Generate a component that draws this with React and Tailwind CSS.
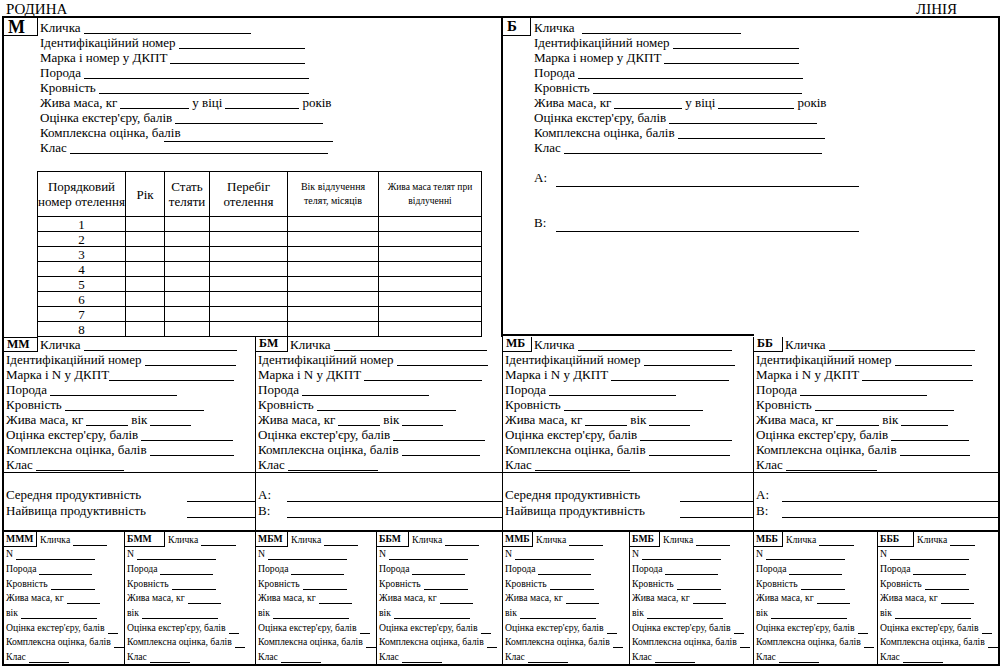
import React from "react";

const L = ({ c = "flex-1", ml = "ml-[3px]", mb = "mb-px" }) => (
  <span className={`h-px bg-black shrink-0 ${c} ${ml} ${mb}`} />
);

const F = ({ label, w = "", lw = "flex-1", ml = "ml-[3px]", mb = "mb-px", h = "h-[15px]" }) => (
  <div className={`flex items-end whitespace-nowrap shrink-0 ${h} ${w}`}>
    <span className="shrink-0">{label}</span>
    <L c={lw} ml={ml} mb={mb} />
  </div>
);

function Table() {
  const head = "h-[45px] border-r border-b border-black flex items-center justify-center text-center";
  return (
    <div className="ml-[33px] mt-[16px] w-[445px] border-l border-t border-black grid grid-cols-[88px_39px_45px_78px_91px_103px]">
      <div className={head}>Порядковий<br />номер отелення</div>
      <div className={head}>Рік</div>
      <div className={head}>Стать<br />теляти</div>
      <div className={head}>Перебіг<br />отелення</div>
      <div className={`${head} text-[10px] leading-[14px]`}>Вік відлучення<br />телят, місяців</div>
      <div className={`${head} text-[9.5px] leading-[14px]`}>Жива маса телят при<br />відлученні</div>
      {[1, 2, 3, 4, 5, 6, 7, 8].map((n) => (
        <React.Fragment key={n}>
          <div className="h-[15px] border-r border-b border-black text-center">{n}</div>
          <div className="h-[15px] border-r border-b border-black" />
          <div className="h-[15px] border-r border-b border-black" />
          <div className="h-[15px] border-r border-b border-black" />
          <div className="h-[15px] border-r border-b border-black" />
          <div className="h-[15px] border-r border-b border-black" />
        </React.Fragment>
      ))}
    </div>
  );
}

function Mid({ cell, box, name, d, bottom, lab }) {
  return (
    <div className={`${cell} border-black flex flex-col`}>
      <div className="border-b border-black flex flex-col">
        <div className="flex items-end h-[15px]">
          <div className={`${box} h-[15px] border-r border-b border-black font-bold text-[12px] leading-[13px] pl-[3px] self-start shrink-0`}>{name}</div>
          <div className="pl-[2px]">
            <F label="Кличка" w={d.kl} />
          </div>
        </div>
        <div className="pl-[2px] flex flex-col">
          <F label="Ідентифікаційний номер" w={d.id} />
          <F label="Марка і N у ДКПТ" w={d.mk} ml={d.mkml} />
          <F label="Порода" w={d.por} />
          <F label="Кровність" w={d.kr} />
          <div className="flex items-end h-[15px] whitespace-nowrap">
            <span>Жива маса, кг</span>
            <L c={d.z1} />
            <span className="ml-[3px]">вік</span>
            <L c={d.z2} />
          </div>
          <F label="Оцінка екстер'єру, балів" w={d.ot} />
          <F label="Комплексна оцінка, балів" w={d.ko} />
          <F label="Клас" w={d.kl2} />
        </div>
      </div>
      <div className="pt-[14px] pl-[2px] flex flex-col">
        <div className="flex items-end h-[15px] whitespace-nowrap">
          <span className={`${lab} shrink-0`}>{bottom === "prod" ? "Середня продуктивність" : "А:"}</span>
          <L c="flex-1" ml="ml-0" mb="mb-0" />
        </div>
        <div className="flex items-end h-[16px] whitespace-nowrap">
          <span className={`${lab} shrink-0`}>{bottom === "prod" ? "Найвища продуктивність" : "В:"}</span>
          <L c="flex-1" ml="ml-0" mb="mb-0" />
        </div>
      </div>
    </div>
  );
}

function BF({ label, lw }) {
  return (
    <div className="flex items-end whitespace-nowrap pl-[2px]">
      <span>{label}</span>
      <L c={lw} ml="ml-[3px]" mb="mb-px" />
    </div>
  );
}

function Bot({ cell, box, name, kl }) {
  return (
    <div className={`${cell} border-black h-full grid grid-rows-9 text-[9.7px] leading-[14px]`}>
      <div className="flex items-end whitespace-nowrap">
        <div className={`${box} h-full border-r border-b border-black font-bold pl-[2px] flex items-center shrink-0`}>{name}</div>
        <span className="pl-[3px]">Кличка</span>
        <L c={kl} ml="ml-[3px]" mb="mb-px" />
      </div>
      <BF label="N" lw="w-[79px]" />
      <BF label="Порода" lw="w-[53px]" />
      <BF label="Кровність" lw="w-[44px]" />
      <BF label="Жива маса, кг" lw="w-[33px]" />
      <BF label="вік" lw="w-[76px]" />
      <BF label="Оцінка екстер'єру, балів" lw="w-[10px]" />
      <BF label="Комплексна оцінка, балів" lw="w-[10px]" />
      <BF label="Клас" lw="w-[40px]" />
    </div>
  );
}

const mids = [
  {
    cell: "w-[252px] border-r",
    box: "w-[34px] border-t",
    name: "ММ",
    bottom: "prod",
    lab: "w-[181px]",
    d: { kl: "w-[197px]", id: "w-[230px]", mk: "w-[228px]", mkml: "ml-0", por: "w-[171px]", kr: "w-[198px]", z1: "w-[42px]", z2: "w-[41px]", ot: "w-[227px]", ko: "w-[228px]", kl2: "w-[118px]" },
  },
  {
    cell: "w-[247px] border-r",
    box: "w-[32px]",
    name: "БМ",
    bottom: "ab",
    lab: "w-[29px]",
    d: { kl: "w-[197px]", id: "w-[230px]", mk: "w-[224px]", mkml: "ml-[3px]", por: "w-[171px]", kr: "w-[198px]", z1: "w-[42px]", z2: "w-[41px]", ot: "w-[227px]", ko: "w-[222px]", kl2: "w-[120px]" },
  },
  {
    cell: "w-[251px] border-r",
    box: "w-[29px]",
    name: "МБ",
    bottom: "prod",
    lab: "w-[175px]",
    d: { kl: "w-[198px]", id: "w-[230px]", mk: "w-[224px]", mkml: "ml-[3px]", por: "w-[171px]", kr: "w-[198px]", z1: "w-[42px]", z2: "w-[41px]", ot: "w-[227px]", ko: "w-[225px]", kl2: "w-[125px]" },
  },
  {
    cell: "w-[244px]",
    box: "w-[29px]",
    name: "ББ",
    bottom: "ab",
    lab: "w-[26px]",
    d: { kl: "w-[190px]", id: "w-[216px]", mk: "w-[217px]", mkml: "ml-[3px]", por: "w-[171px]", kr: "w-[198px]", z1: "w-[43px]", z2: "w-[47px]", ot: "w-[213px]", ko: "w-[214px]", kl2: "w-[121px]" },
  },
];

const bots = [
  { cell: "w-[121px] border-r", box: "w-[33px]", name: "МММ", kl: "w-[34px]" },
  { cell: "w-[131px] border-r", box: "w-[40px]", name: "БММ", kl: "w-[35px]" },
  { cell: "w-[121px] border-r", box: "w-[32px]", name: "МБМ", kl: "w-[34px]" },
  { cell: "w-[126px] border-r", box: "w-[32px]", name: "ББМ", kl: "w-[34px]" },
  { cell: "w-[127px] border-r", box: "w-[30px]", name: "ММБ", kl: "w-[34px]" },
  { cell: "w-[124px] border-r", box: "w-[30px]", name: "БМБ", kl: "w-[34px]" },
  { cell: "w-[124px] border-r", box: "w-[29px]", name: "МББ", kl: "w-[35px]" },
  { cell: "w-[120px]", box: "w-[36px]", name: "БББ", kl: "w-[25px]" },
];

export default function App() {
  return (
    <div className="w-[1002px] h-[670px] bg-white text-black [font-family:'Liberation_Serif',serif] text-[13px] leading-[15px] overflow-hidden">
      <div className="h-[16px] flex items-end justify-between pl-[6px] pr-[45px] text-[15px] leading-[14px]">
        <span>РОДИНА</span>
        <span>ЛІНІЯ</span>
      </div>
      <div className="ml-[2px] w-[998px] border-2 border-black">
        {/* top section */}
        <div className="flex h-[319px]">
          <div className="w-[499px] border-r-2 border-black flex flex-col">
            <div className="flex">
              <div className="w-[34px] h-[18px] self-start border-r border-b border-black pl-[4px] font-bold text-[18px] leading-[18px]">М</div>
              <div className="pl-[2px] pt-[2px] flex flex-col">
                <F label="Кличка" w="w-[211px]" />
                <F label="Ідентифікаційний номер" w="w-[265px]" />
                <F label="Марка і номер у ДКПТ" w="w-[265px]" />
                <F label="Порода" w="w-[269px]" />
                <F label="Кровність" w="w-[269px]" />
                <div className="flex items-end h-[15px] whitespace-nowrap">
                  <span>Жива маса, кг</span>
                  <L c="w-[69px]" />
                  <span className="ml-[3px]">у віці</span>
                  <L c="w-[74px]" />
                  <span className="ml-[3px]">років</span>
                </div>
                <F label="Оцінка екстер'єру, балів" w="w-[283px]" />
                <F label="Комплексна оцінка, балів" w="w-[293px]" ml="-ml-[17px]" mb="-mb-[2px]" />
                <F label="Клас" w="w-[288px]" />
              </div>
            </div>
            <Table />
          </div>
          <div className="flex-1 flex flex-col">
            <div className="flex">
              <div className="w-[28px] h-[18px] self-start border-r border-b border-black pl-[4px] font-bold text-[15px] leading-[17px]">Б</div>
              <div className="pl-[3px] pt-[2px] flex flex-col">
                <F label="Кличка" w="w-[207px]" ml="ml-[7px]" />
                <F label="Ідентифікаційний номер" w="w-[265px]" />
                <F label="Марка і номер у ДКПТ" w="w-[265px]" />
                <F label="Порода" w="w-[269px]" />
                <F label="Кровність" w="w-[268px]" />
                <div className="flex items-end h-[15px] whitespace-nowrap">
                  <span>Жива маса, кг</span>
                  <L c="w-[68px]" />
                  <span className="ml-[3px]">у віці</span>
                  <L c="w-[76px]" />
                  <span className="ml-[3px]">років</span>
                </div>
                <F label="Оцінка екстер'єру, балів" w="w-[283px]" />
                <F label="Комплексна оцінка, балів" w="w-[291px]" />
                <F label="Клас" w="w-[288px]" />
              </div>
            </div>
            <div className="pl-[31px] mt-[15px] flex flex-col">
              <div className="flex items-end h-[15px] w-[325px]">
                <span className="w-[22px] shrink-0">А:</span>
                <L c="flex-1" ml="ml-0" mb="-mb-[2px]" />
              </div>
              <div className="flex items-end h-[15px] w-[325px] mt-[30px]">
                <span className="w-[22px] shrink-0">В:</span>
                <L c="flex-1" ml="ml-0" mb="-mb-[2px]" />
              </div>
            </div>
            <div className="mt-auto mb-px h-[2px] w-[251px] bg-black" />
          </div>
        </div>
        {/* middle section */}
        <div className="flex h-[195px] border-b-2 border-black">
          {mids.map((m) => (
            <Mid key={m.name} {...m} />
          ))}
        </div>
        {/* bottom section */}
        <div className="flex h-[132px]">
          {bots.map((b) => (
            <Bot key={b.name} {...b} />
          ))}
        </div>
      </div>
    </div>
  );
}
